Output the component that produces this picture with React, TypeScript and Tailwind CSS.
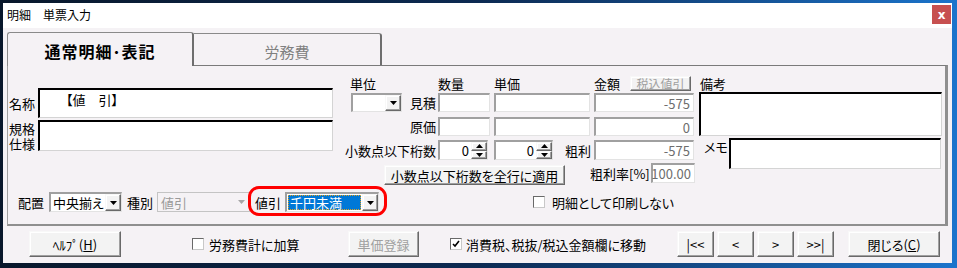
import React from "react";

const SUNKEN_DARK =
  "border-t-2 border-l-2 border-r border-b border-t-black border-l-black border-r-[#d4d4d4] border-b-[#d4d4d4] bg-white";
const SUNKEN_LIGHT =
  "border-t-2 border-l-2 border-r border-b border-t-[#a0a0a0] border-l-[#a0a0a0] border-r-[#e3e3e3] border-b-[#e3e3e3] bg-white";
const RAISED =
  "bg-[#f3f3f3] border border-t-[#f8f8f8] border-l-[#f8f8f8] border-r-[#696969] border-b-[#696969] shadow-[inset_-1px_-1px_#a0a0a0,inset_1px_1px_#ffffff]";

function Arrow({ gray = false }: { gray?: boolean }) {
  return (
    <svg width="7" height="4" viewBox="0 0 7 4">
      <polygon points="0,0 7,0 3.5,4" fill={gray ? "#a6a6a6" : "#000"} />
    </svg>
  );
}

function DropBtn() {
  return (
    <div className={`w-[16px] h-full flex items-center justify-center ${RAISED}`}>
      <Arrow />
    </div>
  );
}

function Combo({ w, text }: { w: string; text?: string }) {
  return (
    <div className={`${w} h-full flex ${SUNKEN_LIGHT}`}>
      <div className="flex-1 flex items-center pl-[2px] text-[13px] leading-none">{text}</div>
      <DropBtn />
    </div>
  );
}

function Box({ w, h = "h-full", value, dark = false }: { w: string; h?: string; value?: string; dark?: boolean }) {
  return (
    <div
      className={`${w} ${h} flex items-center justify-end pr-[3px] text-[13px] leading-none text-[#6d6d6d] ${
        dark ? SUNKEN_DARK : SUNKEN_LIGHT
      }`}
    >
      {value}
    </div>
  );
}

function Spin({ w, value }: { w: string; value: string }) {
  return (
    <div className={`${w} h-full flex ${SUNKEN_LIGHT}`}>
      <div className="flex-1 flex items-center justify-end pr-[2px] text-[13px] leading-none">{value}</div>
      <div className="w-[16px] flex flex-col">
        <div className={`flex-1 flex items-center justify-center ${RAISED}`}>
          <svg width="7" height="4" viewBox="0 0 7 4">
            <polygon points="0,4 7,4 3.5,0" fill="#000" />
          </svg>
        </div>
        <div className={`flex-1 flex items-center justify-center ${RAISED}`}>
          <svg width="7" height="4" viewBox="0 0 7 4">
            <polygon points="0,0 7,0 3.5,4" fill="#000" />
          </svg>
        </div>
      </div>
    </div>
  );
}

function Check({ checked = false }: { checked?: boolean }) {
  return (
    <div className="w-[12px] h-[12px] bg-white border border-t-[#696969] border-l-[#696969] border-r-[#c8c8c8] border-b-[#c8c8c8] flex items-center justify-center">
      {checked && (
        <svg width="8" height="8" viewBox="0 0 8 8">
          <polyline points="1,4 3,6 7,1" fill="none" stroke="#000" strokeWidth="1.6" />
        </svg>
      )}
    </div>
  );
}

export default function App() {
  return (
    <div className="w-[957px] h-[268px] overflow-hidden bg-linear-to-r from-[#08172b] via-[#0c2a52] to-[#1b74cc] pt-[3px] pl-[3px] font-['Noto_Sans_CJK_JP','Noto_Sans',sans-serif] [font-feature-settings:'palt'] text-black">
      <div className="w-[949px] h-[260px] bg-[#f5f2f5] flex flex-col">
        {/* title bar */}
        <div className="h-[25px] bg-white flex items-start shrink-0">
          <span className="ml-[4px] mt-[5px] text-[12px] leading-[14px]">明細　単票入力</span>
          <div className="ml-auto mr-[1px] mt-[2px] w-[19px] h-[19px] bg-[#c75050] text-white flex items-center justify-center text-[12px] font-bold leading-none font-['DejaVu_Sans',sans-serif]">
            x
          </div>
        </div>

        <div className="pl-[4px] pt-[4px]">
          {/* tabs */}
          <div className="flex items-end h-[33px]">
            <div className="relative z-10 w-[187px] h-[34px] -mb-[1px] bg-[#f5f2f5] border-l border-t border-r-2 border-l-[#8a8a8a] border-t-[#8a8a8a] border-r-[#6e6e6e] rounded-tl-[3px] rounded-tr-[3px] flex items-center justify-center pt-[2px] text-[16px] font-bold leading-none tracking-[1px]">
              通常明細･表記
            </div>
            <div className="w-[188px] h-[32px] border-t border-r-2 border-t-[#8a8a8a] border-r-[#6e6e6e] rounded-tr-[3px] flex items-center justify-center pt-[3px] text-[15px] leading-none text-[#808080]">
              労務費
            </div>
          </div>

          {/* panel */}
          <div className="w-[941px] h-[161px] border-l border-t border-r-[3px] border-b-2 border-l-[#a0a0a0] border-t-[#7a7a7a] border-r-[#8f8f8f] border-b-[#8f8f8f] flex flex-col">
            <div className="mt-[9px] flex items-start">
              {/* left column */}
              <div className="ml-[1px] w-[324px] mt-[13px]">
                <div className="flex h-[30px]">
                  <div className="w-[29px] flex items-center text-[13px] leading-none">名称</div>
                  <div className={`w-[295px] h-[30px] pl-[26px] pt-[2px] text-[13px] leading-[16px] ${SUNKEN_DARK}`}>
                    【値　引】
                  </div>
                </div>
                <div className="flex h-[31px] mt-[2px]">
                  <div className="w-[29px] pt-[1px] text-[13px] leading-[15px]">
                    規格
                    <br />
                    仕様
                  </div>
                  <div className={`w-[295px] h-[31px] ${SUNKEN_DARK}`} />
                </div>
              </div>

              {/* middle column */}
              <div className="ml-[10px] w-[352px]">
                <div className="h-[17px] flex items-center text-[13px] leading-none">
                  <span className="ml-[7px] w-[88px]">単位</span>
                  <span className="w-[56px]">数量</span>
                  <span className="w-[100px]">単価</span>
                  <span className="w-[36px]">金額</span>
                  <div className={`w-[61px] h-[15px] flex items-center justify-center text-[12px] text-[#a0a0a0] ${RAISED}`}>
                    税込値引
                  </div>
                </div>
                <div className="mt-[1px] h-[19px] flex">
                  <div className="ml-[8px] h-full">
                    <Combo w="w-[51px]" />
                  </div>
                  <div className="w-[36px] flex items-center justify-end pr-[2px] text-[13px] leading-none">見積</div>
                  <Box w="w-[52px]" />
                  <div className="ml-[4px]">
                    <Box w="w-[96px]" h="h-[19px]" />
                  </div>
                  <div className="ml-[4px]">
                    <Box w="w-[100px]" h="h-[19px]" value="-575" />
                  </div>
                </div>
                <div className="mt-[5px] h-[19px] flex">
                  <div className="w-[95px] flex items-center justify-end pr-[2px] text-[13px] leading-none">原価</div>
                  <Box w="w-[52px]" />
                  <div className="ml-[4px]">
                    <Box w="w-[96px]" h="h-[19px]" />
                  </div>
                  <div className="ml-[4px]">
                    <Box w="w-[100px]" h="h-[19px]" value="0" />
                  </div>
                </div>
                <div className="mt-[4px] h-[20px] flex">
                  <div className="w-[95px] flex items-center justify-end pr-[2px] text-[13px] leading-none whitespace-nowrap">
                    小数点以下桁数
                  </div>
                  <Spin w="w-[50px]" value="0" />
                  <div className="ml-[6px] h-full">
                    <Spin w="w-[59px]" value="0" />
                  </div>
                  <div className="ml-[12px] w-[29px] flex items-center text-[13px] leading-none">粗利</div>
                  <Box w="w-[100px]" value="-575" />
                </div>
                <div className="mt-[3px] h-[22px] flex items-start">
                  <div className={`ml-[41px] mt-[2px] w-[181px] h-[20px] flex items-center justify-center text-[13px] leading-none ${RAISED}`}>
                    小数点以下桁数を全行に適用
                  </div>
                  <div className="ml-[25px] w-[61px] h-[20px] flex items-center text-[13px] leading-none whitespace-nowrap">
                    粗利率[%]
                  </div>
                  <Box w="w-[44px]" h="h-[20px]" value="100.00" />
                </div>
              </div>

              {/* right column */}
              <div className="ml-[4px] w-[243px]">
                <div className="h-[17px] flex items-center pl-[1px] text-[13px] leading-none">備考</div>
                <div className={`w-full h-[44px] ${SUNKEN_DARK}`} />
                <div className="mt-[2px] flex">
                  <div className="w-[30px] pl-[5px] pt-[2px] text-[13px] leading-[14px]">メモ</div>
                  <div className={`w-[212px] h-[31px] ${SUNKEN_DARK}`} />
                </div>
              </div>
            </div>

            {/* bottom row of panel */}
            <div className="relative mt-[7px] h-[20px] flex items-center text-[13px] leading-none">
              <span className="ml-[10px] w-[31px]">配置</span>
              <Combo w="w-[73px]" text="中央揃え" />
              <span className="ml-[5px] w-[30px]">種別</span>
              <div className="w-[93px] h-full flex border border-[#c4c4c4] bg-[#f5f2f5]">
                <div className="flex-1 flex items-center pl-[3px] text-[#9a9a9a]">値引</div>
                <div className="w-[16px] flex items-center justify-center">
                  <Arrow gray />
                </div>
              </div>
              <span className="ml-[5px] w-[30px]">値引</span>
              <div className={`w-[94px] h-full flex ${SUNKEN_LIGHT}`}>
                <div className="flex-1 flex items-center p-[1px]">
                  <div className="w-full h-full bg-[#0078d7] text-white flex items-center pl-[1px] border border-dotted border-[#e0a020]">
                    千円未満
                  </div>
                </div>
                <DropBtn />
              </div>
              <div className="ml-[154px]">
                <Check />
              </div>
              <span className="ml-[7px]">明細として印刷しない</span>
              <div className="absolute left-[240px] top-[-6px] w-[139px] h-[30px] border-[3px] border-[#ff0000] rounded-[11px]" />
            </div>
          </div>

          {/* bottom bar */}
          <div className="mt-[5px] h-[26px] flex items-center text-[13px] leading-none">
            <div className={`ml-[22px] w-[92px] h-full flex items-center justify-center ${RAISED}`}>
              ﾍﾙﾌﾟ(<span className="underline">H</span>)
            </div>
            <div className="ml-[71px]">
              <Check />
            </div>
            <span className="ml-[5px] w-[139px]">労務費計に加算</span>
            <div className={`w-[71px] h-full flex items-center justify-center text-[#a0a0a0] ${RAISED}`}>単価登録</div>
            <div className="ml-[31px]">
              <Check checked />
            </div>
            <span className="ml-[4px] w-[211px] whitespace-nowrap">消費税、税抜/税込金額欄に移動</span>
            <div className={`w-[37px] h-full flex items-center justify-center ${RAISED}`}>|&lt;&lt;</div>
            <div className={`ml-[3px] w-[37px] h-full flex items-center justify-center ${RAISED}`}>&lt;</div>
            <div className={`ml-[3px] w-[37px] h-full flex items-center justify-center ${RAISED}`}>&gt;</div>
            <div className={`ml-[3px] w-[37px] h-full flex items-center justify-center ${RAISED}`}>&gt;&gt;|</div>
            <div className={`ml-[14px] w-[92px] h-full flex items-center justify-center ${RAISED}`}>
              閉じる(<span className="underline">C</span>)
            </div>
          </div>
        </div>
      </div>
    </div>
  );
}
